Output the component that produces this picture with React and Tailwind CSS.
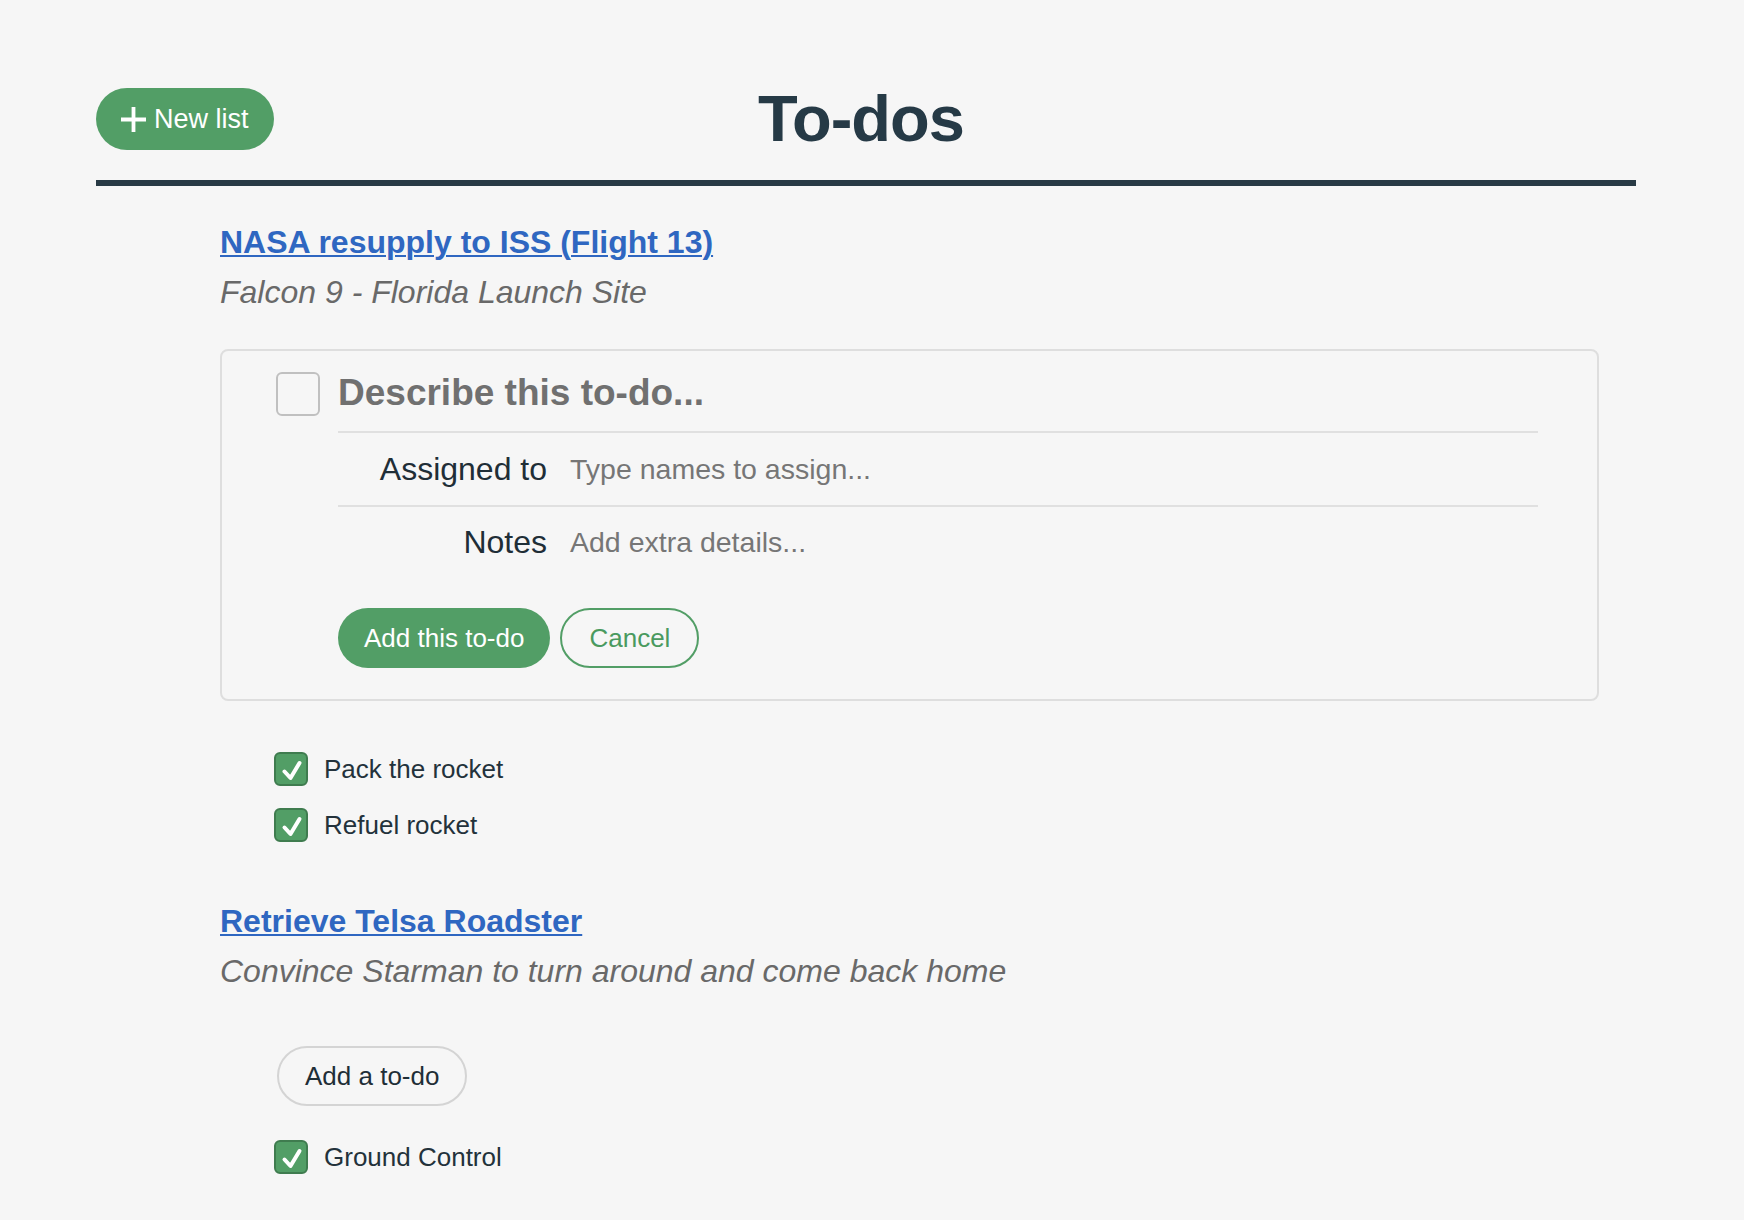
import React from 'react';

function Checked() {
    return (
        <span className="w-[34px] h-[34px] shrink-0 rounded-[6px] border-2 border-[#3f7c4f] bg-[#529e66] flex items-center justify-center">
            <svg width="34" height="34" viewBox="0 0 34 34" className="-m-[2px]">
                <path d="M10.5 19.5 L16.5 26 L25.5 11" fill="none" stroke="white" strokeWidth="4" strokeLinecap="round" strokeLinejoin="round" />
            </svg>
        </span>
    );
}

function DoneItem({ label }) {
    return (
        <div className="flex items-center gap-[16px] h-[34px]">
            <Checked />
            <span className="text-[26px] text-[#23323b]">{label}</span>
        </div>
    );
}

function ListHeading({ title, subtitle }) {
    return (
        <>
            <a href="#" className="block w-fit text-[32px] leading-[50px] font-bold text-[#2f67c1] underline decoration-2 underline-offset-[2px]">
                {title}
            </a>
            <p className="text-[32px] leading-[50px] italic text-[#696969]">{subtitle}</p>
        </>
    );
}

function NewTodoForm() {
    return (
        <div className="mt-[32px] border-2 border-[#dedede] rounded-[8px] pl-[54px] pr-[59px] pt-[20px] pb-[31px]">
            <div className="flex items-start gap-[18px]">
                <span className="w-[44px] h-[44px] mt-[1px] shrink-0 rounded-[6px] border-2 border-[#c0c0c0]" />
                <div className="flex-1">
                    <div className="pb-[16px] border-b-2 border-[#e0e0e0] text-[37px] leading-[44px] font-bold text-[#707070]">
                        Describe this to-do...
                    </div>
                    <div className="h-[74px] flex items-center border-b-2 border-[#e0e0e0]">
                        <span className="w-[209px] text-right text-[32px] text-[#1f2e37]">Assigned to</span>
                        <span className="ml-[23px] text-[28.5px] text-[#767676]">Type names to assign...</span>
                    </div>
                    <div className="h-[70px] flex items-center">
                        <span className="w-[209px] text-right text-[32px] text-[#1f2e37]">Notes</span>
                        <span className="ml-[23px] text-[28.5px] text-[#767676]">Add extra details...</span>
                    </div>
                    <div className="mt-[31px] flex gap-[10px]">
                        <button className="h-[60px] px-[26px] rounded-full bg-[#529e66] text-white text-[26px]">
                            Add this to-do
                        </button>
                        <button className="h-[60px] px-[27px] rounded-full border-2 border-[#529e66] text-[#4a9a5f] text-[26px]">
                            Cancel
                        </button>
                    </div>
                </div>
            </div>
        </div>
    );
}

export default function App() {
    return (
        <div className="min-h-screen bg-[#f6f6f6] pb-[60px]" style={{ fontFamily: '"Liberation Sans", Arial, sans-serif' }}>
            <div className="ml-[96px] w-[1540px]">
                {/* header */}
                <div className="pt-[88px] grid grid-cols-[1fr_auto_1fr] items-center">
                    <div>
                        <button className="h-[62px] pl-[24px] pr-[25px] rounded-full bg-[#529e66] text-white text-[27px] flex items-center gap-[7px]">
                            <svg width="27" height="27" viewBox="0 0 27 27">
                                <path d="M13.5 1 V26 M1 13.5 H26" stroke="white" strokeWidth="3.8" />
                            </svg>
                            New list
                        </button>
                    </div>
                    <h1 className="pr-[10px] text-[65px] leading-[62px] font-bold tracking-[-1px] text-[#263a46]">To-dos</h1>
                    <div />
                </div>
                <div className="mt-[30px] h-[6px] bg-[#283a45]" />

                {/* lists */}
                <div className="ml-[124px] w-[1379px]">
                    <div className="mt-[31px]">
                        <ListHeading title="NASA resupply to ISS (Flight 13)" subtitle="Falcon 9 - Florida Launch Site" />
                        <NewTodoForm />
                        <div className="mt-[51px] ml-[54px] flex flex-col gap-[22px]">
                            <DoneItem label="Pack the rocket" />
                            <DoneItem label="Refuel rocket" />
                        </div>
                    </div>

                    <div className="mt-[54px]">
                        <ListHeading title="Retrieve Telsa Roadster" subtitle="Convince Starman to turn around and come back home" />
                        <button className="mt-[50px] ml-[57px] h-[60px] px-[26px] rounded-full border-2 border-[#d4d4d4] text-[26px] text-[#1f2e37]">
                            Add a to-do
                        </button>
                        <div className="mt-[34px] ml-[54px]">
                            <DoneItem label="Ground Control" />
                        </div>
                    </div>
                </div>
            </div>
        </div>
    );
}
